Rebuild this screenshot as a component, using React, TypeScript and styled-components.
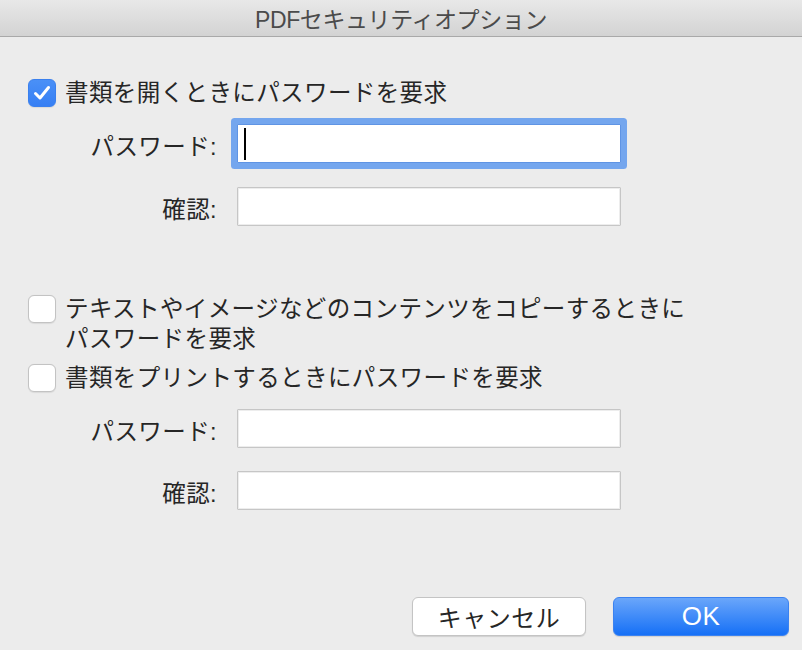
import styled, { createGlobalStyle } from "styled-components";

const GlobalStyle = createGlobalStyle`
  html, body {
    margin: 0;
    padding: 0;
    background: #ececec;
  }
  body {
    font-family: "Liberation Sans", "Noto Sans CJK JP", sans-serif;
    color: #262626;
  }
`;

const Window = styled.div`
  width: 802px;
  height: 650px;
  background: #ececec;
  display: flex;
  flex-direction: column;
  overflow: hidden;
`;

const TitleBar = styled.div`
  height: 36px;
  flex: none;
  display: flex;
  align-items: center;
  justify-content: center;
  background: linear-gradient(#e8e8e8, #d3d3d3);
  border-bottom: 1px solid #a9a9a9;
`;

const Title = styled.div`
  font-size: 23px;
  color: #4b4b4b;
  letter-spacing: -0.4px;
`;

const Body = styled.div`
  display: flex;
  flex-direction: column;
  padding: 0 13px 0 28px;
`;

const CheckRow = styled.label<{ $top: number }>`
  display: flex;
  align-items: flex-start;
  gap: 9px;
  margin-top: ${(p) => p.$top}px;
  font-size: 23.5px;
  line-height: 30px;
  letter-spacing: 0.4px;
`;

const Box = styled.span<{ $checked?: boolean }>`
  flex: none;
  width: 28px;
  height: 28px;
  margin-top: 1px;
  box-sizing: border-box;
  border-radius: 6px;
  display: flex;
  align-items: center;
  justify-content: center;
  background: ${(p) => (p.$checked ? "linear-gradient(#4a90f7, #367ff4)" : "#ffffff")};
  border: 1px solid ${(p) => (p.$checked ? "#3a80ee" : "#c3c3c3")};
  box-shadow: 0 0.5px 1px rgba(0, 0, 0, 0.08);
`;

const FieldRow = styled.div<{ $top: number }>`
  display: grid;
  grid-template-columns: 189px 384px;
  column-gap: 20px;
  align-items: center;
  margin-top: ${(p) => p.$top}px;
`;

const FieldLabel = styled.span`
  text-align: right;
  font-size: 23.5px;
  line-height: 30px;
  padding-top: 6px;
  letter-spacing: 0.4px;
`;

const Input = styled.div<{ $focused?: boolean }>`
  position: relative;
  height: 39px;
  box-sizing: border-box;
  background: #ffffff;
  border: 1px solid ${(p) => (p.$focused ? "#5f94e4" : "#c6c6c6")};
  border-radius: 1px;
  box-shadow: ${(p) =>
    p.$focused
      ? "0 0 0 6px #74a6ee"
      : "inset 0 0 0 1px #ededed"};
`;

const Caret = styled.span`
  position: absolute;
  left: 6px;
  top: 3px;
  width: 2px;
  height: 32px;
  background: #000000;
`;

const Footer = styled.div`
  display: flex;
  justify-content: flex-end;
  gap: 27px;
  margin-top: 87px;
`;

const Button = styled.button<{ $primary?: boolean }>`
  height: 39px;
  width: ${(p) => (p.$primary ? 176 : 174)}px;
  box-sizing: border-box;
  border-radius: 6px;
  font-family: inherit;
  font-size: ${(p) => (p.$primary ? 26 : 24)}px;
  letter-spacing: 0.5px;
  padding: 0;
  cursor: pointer;
  color: ${(p) => (p.$primary ? "#ffffff" : "#262626")};
  background: ${(p) =>
    p.$primary ? "linear-gradient(#6aa6fa, #1670f6)" : "#ffffff"};
  border: 1px solid ${(p) => (p.$primary ? "#3b82f0" : "#c4c4c4")};
  box-shadow: 0 1px 1px rgba(0, 0, 0, 0.12);
`;

const Check = () => (
  <svg width="20" height="20" viewBox="0 0 20 20" fill="none">
    <path
      d="M3.5 10.5 L8 15 L16.5 4.5"
      stroke="#ffffff"
      strokeWidth="3"
      strokeLinecap="round"
      strokeLinejoin="round"
    />
  </svg>
);

const PasswordFields = ({ first, focused }: { first: number; focused?: boolean }) => (
  <>
    <FieldRow $top={first}>
      <FieldLabel>パスワード:</FieldLabel>
      <Input $focused={focused}>{focused && <Caret />}</Input>
    </FieldRow>
    <FieldRow $top={focused ? 24 : 23}>
      <FieldLabel>確認:</FieldLabel>
      <Input />
    </FieldRow>
  </>
);

export default function App() {
  return (
    <Window>
      <GlobalStyle />
      <TitleBar>
        <Title>PDFセキュリティオプション</Title>
      </TitleBar>
      <Body>
        <CheckRow $top={41}>
          <Box $checked>
            <Check />
          </Box>
          <span>書類を開くときにパスワードを要求</span>
        </CheckRow>
        <PasswordFields first={16} focused />

        <CheckRow $top={68}>
          <Box />
          <span>
            テキストやイメージなどのコンテンツをコピーするときに
            <br />
            パスワードを要求
          </span>
        </CheckRow>
        <CheckRow $top={9}>
          <Box />
          <span>書類をプリントするときにパスワードを要求</span>
        </CheckRow>
        <PasswordFields first={16} />

        <Footer>
          <Button>キャンセル</Button>
          <Button $primary>OK</Button>
        </Footer>
      </Body>
    </Window>
  );
}
